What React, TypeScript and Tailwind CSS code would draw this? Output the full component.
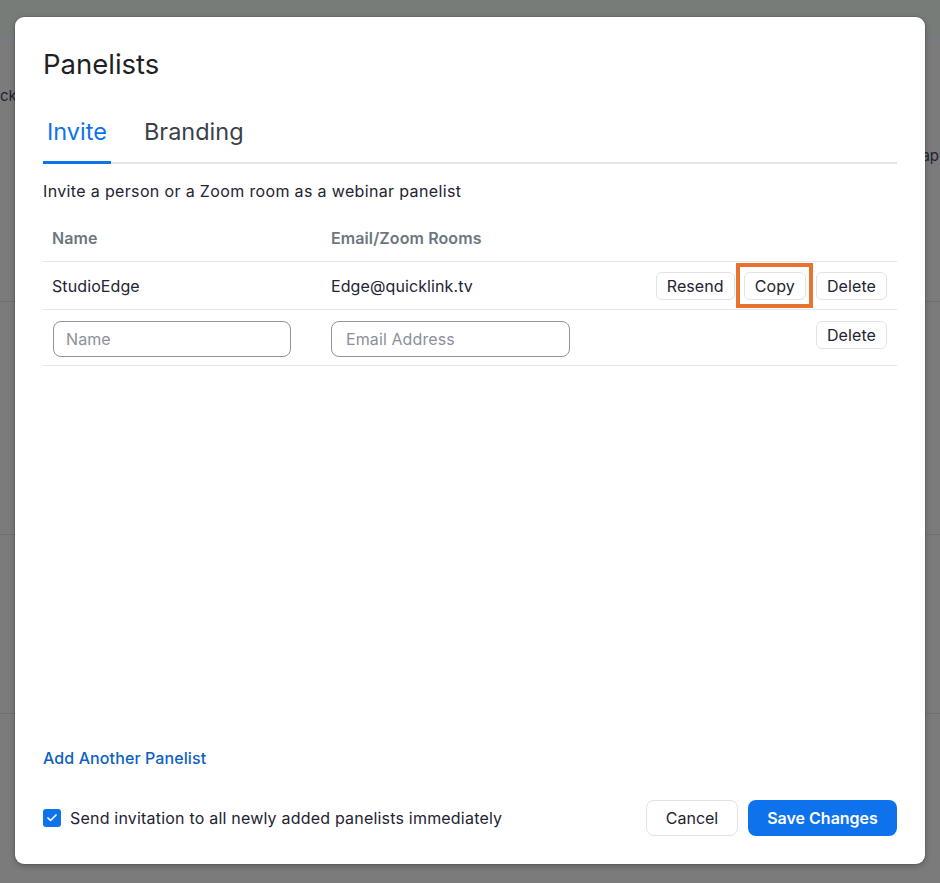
import { Check } from "lucide-react";

const font = { fontFamily: "Inter, 'Noto Sans', 'Liberation Sans', sans-serif" };

const SmallButton = ({ label }: { label: string }) => (
  <button className="h-[28px] px-[10px] rounded-[6px] border border-[#dfe3e8] bg-white text-[16px] leading-[20px] tracking-[0.1px] text-[#232333]">
    {label}
  </button>
);

const Backdrop = () => (
  <div className="flex flex-col w-full text-[15px] text-[#1d2330]">
    <div className="h-[38px] bg-[#787c78] border-b border-[#6e7b96]" />
    <div className="h-[264px] border-b border-[#6f6f6f] flex flex-col">
      <div className="mt-[48px] leading-[20px]">ck</div>
      <div className="flex justify-end mt-[40px] pr-[1px]">
        <div className="leading-[20px]">ap</div>
      </div>
    </div>
    <div className="h-[233px] border-b border-[#6f6f6f]" />
    <div className="h-[179px] border-b border-[#6f6f6f]" />
  </div>
);

export default function App() {
  return (
    <div className="relative w-full h-screen overflow-hidden bg-[#7b7b7b]" style={font}>
      <Backdrop />

      {/* panelists dialog */}
      <div className="absolute left-[15px] top-[17px] w-[910px] h-[847px] bg-white rounded-[9px] shadow-[0_0_0_1px_rgba(0,0,0,0.08),0_2px_6px_rgba(0,0,0,0.25)] flex flex-col px-[28px] pt-[31px] pb-[28px]">
        <h1 className="text-[27.5px] leading-[32px] text-[#1f1f24]">Panelists</h1>

        <div className="mt-[38px] flex gap-[29px] border-b-2 border-[#e4e6ea]">
          <button className="px-[4px] pb-[15px] -mb-[2px] border-b-[3px] border-[#0e72ed] text-[23.5px] leading-[28px] text-[#0e72ed]">
            Invite
          </button>
          <button className="px-[4px] pb-[15px] -mb-[2px] border-b-[3px] border-transparent text-[23.5px] leading-[28px] text-[#3a3f4a]">
            Branding
          </button>
        </div>

        <p className="mt-[17px] text-[16px] leading-[20px] tracking-[0.35px] text-[#232333]">
          Invite a person or a Zoom room as a webinar panelist
        </p>

        <div className="mt-[13px] flex flex-col text-[16px] leading-[20px] tracking-[0.1px]">
          <div className="h-[48px] flex items-center border-b border-[#e4e6ea] font-semibold text-[#6e7680]">
            <div className="w-[279px] pl-[9px]">Name</div>
            <div className="pl-[9px]">Email/Zoom Rooms</div>
          </div>

          <div className="h-[48px] flex items-center border-b border-[#e4e6ea] text-[#232333]">
            <div className="w-[279px] pl-[9px]">StudioEdge</div>
            <div className="pl-[9px]">Edge@quicklink.tv</div>
            <div className="flex-1 flex justify-end gap-[9px] pr-[10px]">
              <SmallButton label="Resend" />
              <div className="relative">
                <SmallButton label="Copy" />
                <span className="absolute -left-[8px] -right-[7px] -top-[9px] -bottom-[8px] border-4 border-[#e8722f] pointer-events-none" />
              </div>
              <div className="ml-[1px]">
                <SmallButton label="Delete" />
              </div>
            </div>
          </div>

          <div className="h-[56px] flex items-start pt-[11px] border-b border-[#e4e6ea]">
            <div className="w-[279px] pl-[10px]">
              <input
                placeholder="Name"
                className="w-[238px] h-[36px] px-[12px] rounded-[8px] border border-[#8e949c] text-[16px] placeholder:text-[#8a9099] outline-none"
              />
            </div>
            <div className="pl-[9px]">
              <input
                placeholder="Email Address"
                className="w-[239px] h-[36px] px-[14px] rounded-[8px] border border-[#8e949c] text-[16px] placeholder:text-[#8a9099] outline-none"
              />
            </div>
            <div className="flex-1 flex justify-end pr-[10px]">
              <SmallButton label="Delete" />
            </div>
          </div>
        </div>

        <div className="flex-1" />

        <button className="self-start text-[16px] leading-[20px] tracking-[0.1px] font-medium text-[#0e5fc2]">
          Add Another Panelist
        </button>

        <div className="mt-[32px] flex items-center">
          <label className="flex items-center gap-[9px] text-[16px] leading-[20px] tracking-[0.2px] text-[#232333]">
            <span className="w-[18px] h-[18px] rounded-[3px] bg-[#0e72ed] flex items-center justify-center">
              <Check size={12} strokeWidth={3.5} className="text-white" />
            </span>
            Send invitation to all newly added panelists immediately
          </label>
          <div className="flex-1" />
          <button className="h-[36px] w-[92px] rounded-[8px] border border-[#dfe3e8] bg-white text-[16px] text-[#232333]">
            Cancel
          </button>
          <button className="ml-[10px] h-[36px] w-[149px] rounded-[8px] bg-[#0e72ed] text-[16px] font-semibold text-white">
            Save Changes
          </button>
        </div>
      </div>
    </div>
  );
}
